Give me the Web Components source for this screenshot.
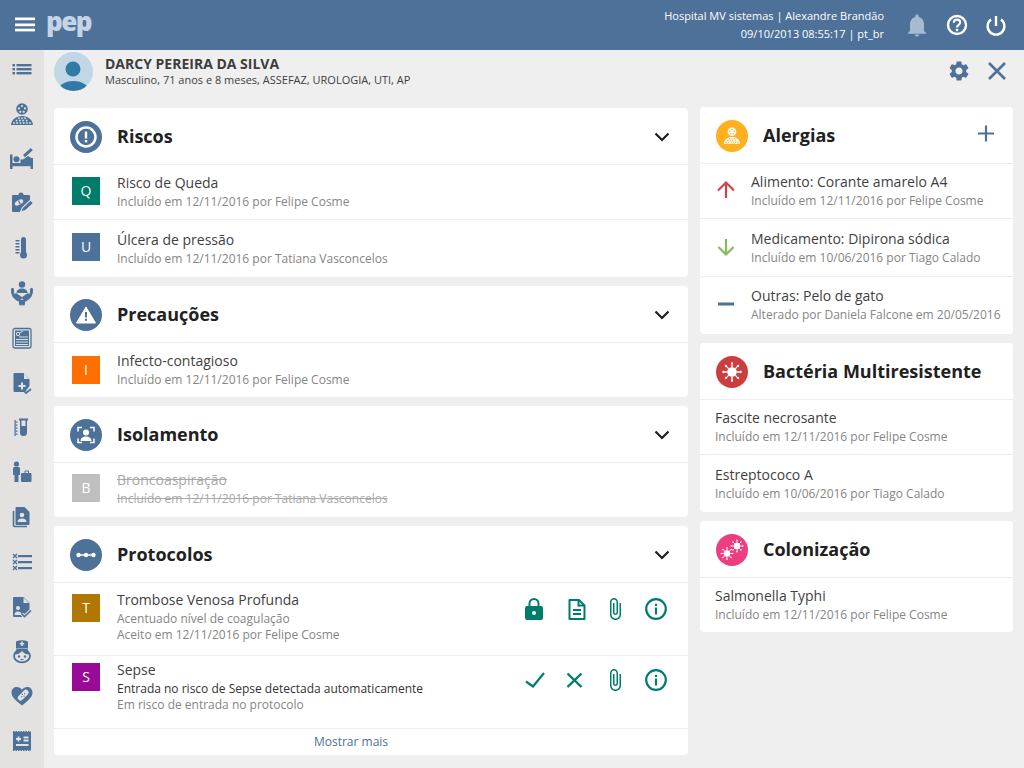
<!DOCTYPE html>
<html lang="pt-BR">
<head>
<meta charset="utf-8">
<title>PEP</title>
<style>
html,body{margin:0;padding:0;width:1024px;height:768px;overflow:hidden;background:#efefef;font-family:"Open Sans",sans-serif}
</style>
</head>
<body>
<pep-app>
  <info-card slot="left" title="Riscos" icon="c-risk" color="#4d7198" chevron>
    <info-row style="--h:55px;--pt:8px;--lt:4px" main="Risco de Queda" sub="Incluído em 12/11/2016 por Felipe Cosme"><row-badge slot="lead" color="#007c6b">Q</row-badge></info-row>
    <info-row style="--h:58px;--pt:10px;--lt:3px" main="Úlcera de pressão" sub="Incluído em 12/11/2016 por Tatiana Vasconcelos"><row-badge slot="lead" color="#4d7198">U</row-badge></info-row>
  </info-card>
  <info-card slot="left" title="Precauções" icon="c-warn" color="#4d7198" chevron>
    <info-row style="--h:55px;--pt:8px;--lt:5px" main="Infecto-contagioso" sub="Incluído em 12/11/2016 por Felipe Cosme"><row-badge slot="lead" color="#ff6f00">I</row-badge></info-row>
  </info-card>
  <info-card slot="left" title="Isolamento" icon="c-iso" color="#4d7198" chevron>
    <info-row struck style="--h:55px;--pt:7px;--lt:4px" main="Broncoaspiração" sub="Incluído em 12/11/2016 por Tatiana Vasconcelos"><row-badge slot="lead" color="#bfbfbf">B</row-badge></info-row>
  </info-card>
  <info-card slot="left" title="Protocolos" icon="c-proto" color="#4d7198" chevron>
    <info-row style="--h:73px;--pt:7px;--lt:4px;--at:7px" main="Trombose Venosa Profunda" sub="Acentuado nível de coagulação" sub2="Aceito em 12/11/2016 por Felipe Cosme">
      <row-badge slot="lead" color="#b07800">T</row-badge>
      <row-actions slot="actions">
        <app-icon name="lock" style="color:#007c6b"></app-icon>
        <app-icon name="doc" style="color:#007c6b;margin-left:19px"></app-icon>
        <app-icon name="clip" style="color:#007c6b;margin-left:14px"></app-icon>
        <app-icon name="info" style="color:#007c6b;margin-left:17px"></app-icon>
      </row-actions>
    </info-row>
    <info-row dark style="--h:73px;--pt:4px;--lt:3px;--at:8px" main="Sepse" sub="Entrada no risco de Sepse detectada automaticamente" sub2="Em risco de entrada no protocolo">
      <row-badge slot="lead" color="#990a96">S</row-badge>
      <row-actions slot="actions">
        <app-icon name="check" style="color:#007c6b"></app-icon>
        <app-icon name="close" style="color:#007c6b;margin-left:17px"></app-icon>
        <app-icon name="clip" style="color:#007c6b;margin-left:16px"></app-icon>
        <app-icon name="info" style="color:#007c6b;margin-left:17px"></app-icon>
      </row-actions>
    </info-row>
    <more-link>Mostrar mais</more-link>
  </info-card>

  <info-card slot="right" title="Alergias" icon="c-allergy" color="#ffb01f" plus>
    <info-row style="--h:55px;--pt:8px;--lt:8px;--pl:16px;--lw:20px;--lg:15px" main="Alimento: Corante amarelo A4" sub="Incluído em 12/11/2016 por Felipe Cosme"><app-icon slot="lead" name="up" size="20" style="color:#d0434a"></app-icon></info-row>
    <info-row style="--h:58px;--pt:10px;--lt:8px;--pl:16px;--lw:20px;--lg:15px" main="Medicamento: Dipirona sódica" sub="Incluído em 10/06/2016 por Tiago Calado"><app-icon slot="lead" name="down" size="20" style="color:#85bb5c"></app-icon></info-row>
    <info-row style="--h:58px;--pt:9px;--lt:8px;--pl:16px;--lw:20px;--lg:15px" main="Outras: Pelo de gato" sub="Alterado por Daniela Falcone em 20/05/2016"><app-icon slot="lead" name="minus" size="20" style="color:#4d7198"></app-icon></info-row>
  </info-card>
  <info-card slot="right" title="Bactéria Multiresistente" icon="c-bact" color="#cc3d3d">
    <info-row style="--h:55px;--pt:8px;--pl:15px;--lw:0px;--lg:0px" main="Fascite necrosante" sub="Incluído em 12/11/2016 por Felipe Cosme"></info-row>
    <info-row style="--h:58px;--pt:10px;--pl:15px;--lw:0px;--lg:0px" main="Estreptococo A" sub="Incluído em 10/06/2016 por Tiago Calado"></info-row>
  </info-card>
  <info-card slot="right" title="Colonização" icon="c-colon" color="#ee3d80">
    <info-row style="--h:55px;--pt:8px;--pl:15px;--lw:0px;--lg:0px" main="Salmonella Typhi" sub="Incluído em 12/11/2016 por Felipe Cosme"></info-row>
  </info-card>
</pep-app>

<script>
const dots=(cx,cy,pts,c)=>pts.map(p=>`<circle cx="${cx+p[0]}" cy="${cy+p[1]}" r="${p[2]||1}" fill="${c}"/>`).join('');
const allergy=(fg,bg)=>`<circle cx="12" cy="7" r="5.800" fill="${fg}"/>`+dots(12,7,[[0,-3,1.100],[-3,-.6,1.100],[3,-.6,1.100],[-1.700,2.800,1.100],[1.700,2.800,1.100]],bg)+
  `<path d="M1 23c.6-5.400 5-9 11-9s10.400 3.600 11 9z" fill="${fg}"/>`+dots(0,0,[[9,16.200,.9],[12,16.200,.9],[15,16.200,.9],[6.500,18.500,.9],[9.800,18.500,.9],[13,18.500,.9],[16.500,18.500,.9],[4,21,.9],[7.200,21,.9],[10.500,21,.9],[13.800,21,.9],[17,21,.9],[20,21,.9]],bg);
const sun=(cx,cy,r,c)=>{let s=`<circle cx="${cx}" cy="${cy}" r="${r}" fill="${c}"/>`;for(let i=0;i<8;i++){const a=i*Math.PI/4,x1=cx+Math.cos(a)*r,y1=cy+Math.sin(a)*r,x2=cx+Math.cos(a)*r*1.8,y2=cy+Math.sin(a)*r*1.8;s+=`<path d="M${x1} ${y1}L${x2} ${y2}" stroke="${c}" stroke-width="${r*.28}"/><circle cx="${x2}" cy="${y2}" r="${r*.24}" fill="${c}"/>`}return s};
const ICONS={
 list:`<g fill="currentColor"><rect x="2.500" y="7" width="2.500" height="2.400"/><rect x="6.500" y="7" width="15" height="2.400"/><rect x="2.500" y="11" width="2.500" height="2.400"/><rect x="6.500" y="11" width="15" height="2.400"/><rect x="2.500" y="15" width="2.500" height="2.400"/><rect x="6.500" y="15" width="15" height="2.400"/></g>`,
 person:allergy('currentColor','#e3e2e1'),
 bed:`<g fill="currentColor"><rect x="0" y="7.500" width="2.500" height="14.500"/><rect x="0" y="16" width="23" height="3.200"/><rect x="20.500" y="11" width="2.500" height="11"/><circle cx="6.500" cy="12.300" r="3"/><path d="M10.500 12.500l3-.2 4.500-3.300 5 3V16H10.500z"/></g><path d="M14 9.200L21.800 2.200" stroke="currentColor" stroke-width="3" fill="none"/>`,
 clip2:`<path fill="currentColor" d="M3 4h5.500a2.500 2.500 0 0 1 5 0H19a1 1 0 0 1 1 1v9l-7 7H3a1 1 0 0 1-1-1V5a1 1 0 0 1 1-1z"/><ellipse cx="9" cy="11.500" rx="4.600" ry="2.400" transform="rotate(-28 9 11.500)" fill="#e3e2e1"/><path d="M8.500 9.500l1.800 3.800" stroke="currentColor" stroke-width="1.200"/><path d="M10.500 21l2-4.500 8-7.500 3 3.200-8 7.500z" fill="currentColor" stroke="#e3e2e1" stroke-width="1.200"/>`,
 thermo:`<g fill="currentColor"><rect x="11" y="1" width="5" height="18" rx="2.500"/><circle cx="13.500" cy="19" r="3.500"/><rect x="5.500" y="4" width="4" height="1.500"/><rect x="5.500" y="7" width="4" height="1.500"/><rect x="5.500" y="10" width="4" height="1.500"/><rect x="5.500" y="13" width="4" height="1.500"/><rect x="5.500" y="16" width="4" height="1.500"/></g>`,
 hands:`<g fill="currentColor"><circle cx="12" cy="3.500" r="3.200"/><path d="M6.500 12c0-3 2.500-4.500 5.500-4.500s5.500 1.500 5.500 4.500z"/></g><g fill="none" stroke="currentColor" stroke-width="3" stroke-linecap="round"><path d="M2.500 8.500C1.800 14 5 17.500 10.500 20V23"/><path d="M21.500 8.500C22.200 14 19 17.500 13.500 20V23"/><path d="M6 13.800l4.500 3.200"/><path d="M18 13.800l-4.500 3.200"/></g>`,
 news:`<rect x="3" y="2.500" width="18" height="19.500" rx="2" fill="none" stroke="currentColor" stroke-width="1.300"/><rect x="5" y="4.500" width="14" height="15.500" fill="currentColor"/><circle cx="8" cy="8" r="1.700" fill="none" stroke="#e3e2e1" stroke-width="1"/><path d="M9.500 7L13 5M9 11h9M6 13.500h12M6 16h12M6 18.500h12" stroke="#e3e2e1" stroke-width="1"/>`,
 docplus:`<path fill="currentColor" d="M4 2h9.500l6 6.500V15l-4.500 6H4.500a1 1 0 0 1-1-1V3a1 1 0 0 1 .5-1z"/><path d="M14 2.500v5.500h5" fill="#e3e2e1"/><path d="M12 11.500v7M8.500 15h7" stroke="#e3e2e1" stroke-width="2"/><path d="M14 20l2 2 5-4" stroke="currentColor" stroke-width="1.700" fill="none"/>`,
 tube:`<g fill="currentColor"><path d="M4.500 5h1.200v16H4.500z"/><path d="M5.500 6.500h2v1.200h-2zM5.500 9.500h2v1.200h-2zM5.500 12.500h2v1.200h-2zM5.500 15.500h2v1.200h-2zM5.500 18.500h2v1.200h-2z"/><path d="M9 3.500h9v2H17v12a3.500 3.500 0 0 1-7 0v-12H9zM11.500 5.500V11h4V5.500z" fill-rule="evenodd"/></g>`,
 bag:`<g fill="currentColor"><circle cx="6.500" cy="4" r="2.600"/><path d="M3 8.500a1.500 1.500 0 0 1 1.500-1.500h4A1.500 1.500 0 0 1 10 8.500V15H8.500v7h-4v-7H3z"/><path d="M12 13h2.500v-1.500a1 1 0 0 1 1-1h2.500a1 1 0 0 1 1 1V13h1.500a1 1 0 0 1 1 1v7a1 1 0 0 1-1 1H12a1 1 0 0 1-1-1v-7a1 1 0 0 1 1-1zM15.500 11.500V13H18v-1.500z" fill-rule="evenodd"/></g>`,
 stack:`<path d="M3.500 6v14.500a1 1 0 0 0 1 1H17" fill="none" stroke="currentColor" stroke-width="1.600"/><path fill="currentColor" d="M6.500 2h8l5 5v12a1 1 0 0 1-1 1h-12a1 1 0 0 1-1-1V3a1 1 0 0 1 1-1z"/><circle cx="12" cy="10" r="2.300" fill="#e3e2e1"/><path d="M7.500 17c0-2.500 2-3.500 4.500-3.500s4.500 1 4.500 3.500z" fill="#e3e2e1"/>`,
 xlist:`<g stroke="currentColor" stroke-width="1.300" fill="none"><path d="M3 4l4 4M7 4l-4 4M3 10l4 4M7 10l-4 4M3 16l4 4M7 16l-4 4"/></g><g fill="currentColor"><rect x="8" y="5" width="14" height="2.200"/><rect x="8" y="11" width="14" height="2.200"/><rect x="8" y="17" width="14" height="2.200"/></g>`,
 doccheck:`<path fill="currentColor" d="M4 2h9.500l6 6v8l-5.500 6H4a1 1 0 0 1-1-1V3a1 1 0 0 1 1-1z"/><path d="M13.500 2.500V8h5.500z" fill="#e3e2e1"/><circle cx="8" cy="13" r="2" fill="#e3e2e1"/><path d="M4.500 20c0-2.500 1.500-3.500 3.500-3.500s3.500 1 3.500 3.500z" fill="#e3e2e1"/><path d="M12 19l2.500 2.500 6.500-6" stroke="#e3e2e1" stroke-width="3.500" fill="none"/><path d="M12 19l2.500 2.500 6.500-6" stroke="currentColor" stroke-width="1.700" fill="none"/>`,
 nurse:`<path fill="currentColor" d="M6 2.500c4-1.800 8-1.800 12 0V9.500H6z"/><path d="M12 2.500v4.500M9.800 4.800h4.400" stroke="#e3e2e1" stroke-width="1.500"/><ellipse cx="12" cy="17" rx="8" ry="6.300" fill="none" stroke="currentColor" stroke-width="1.800"/><path d="M4.500 15.500c3.500 0 5.500-1 7.500-3.500 2 2.500 4 3.500 7.500 3.500l-2-5.500h-11z" fill="currentColor"/><circle cx="9" cy="17.500" r="1.200" fill="currentColor"/><circle cx="15" cy="17.500" r="1.200" fill="currentColor"/><path d="M10.500 20.500h3" stroke="currentColor" stroke-width="1"/>`,
 heart:`<path fill="currentColor" d="M12 21.500C5 16 1.500 12.500 1.500 8.500 1.500 5 4 3 6.800 3c2 0 3.900 1 5.200 2.800C13.300 4 15.200 3 17.200 3 20 3 22.500 5 22.500 8.500c0 4-3.500 7.500-10.500 13z"/><g transform="rotate(-45 13 11)"><rect x="6.500" y="8.500" width="13" height="5.500" rx="2.700" fill="#e3e2e1"/><circle cx="13" cy="10" r=".6" fill="currentColor"/><circle cx="13" cy="12.500" r=".6" fill="currentColor"/><circle cx="11" cy="11.200" r=".6" fill="currentColor"/><circle cx="15" cy="11.200" r=".6" fill="currentColor"/></g>`,
 receipt:`<rect x="3" y="3" width="18" height="18" fill="currentColor"/><path d="M3 2.500h18M3 21.500h18" stroke="currentColor" stroke-width="1" stroke-dasharray="1.500 1"/><path d="M6 10h5M8.500 7.500v5M13.500 8.500h5M13.500 11.500h5M6 16h12.500" stroke="#e3e2e1" stroke-width="1.800"/>`,
 menu:`<g fill="currentColor"><rect x="2" y="4.500" width="20" height="2.700"/><rect x="2" y="10.500" width="20" height="2.700"/><rect x="2" y="15.700" width="20" height="2.700"/></g>`,
 bell:`<path fill="currentColor" d="M12 23.500c1.300 0 2.300-.9 2.300-2h-4.600c0 1.100 1 2 2.300 2zm7-5.500v-6.500c0-3.600-1.900-6.700-5.300-7.500v-.8c0-1-.8-1.700-1.700-1.700s-1.700.7-1.700 1.700V4C6.900 4.800 5 7.900 5 11.500V18l-2.200 2v.8h18.400V20z"/>`,
 help:`<circle cx="12" cy="12" r="9" fill="none" stroke="currentColor" stroke-width="2.400"/><path d="M8.800 9.800c0-2 1.400-3.200 3.200-3.200s3.200 1.200 3.200 2.900c0 2.300-3.200 2.400-3.200 5" fill="none" stroke="currentColor" stroke-width="2.200"/><rect x="10.800" y="15.800" width="2.400" height="2.400" fill="currentColor"/>`,
 power:`<path d="M12 3v10" stroke="currentColor" stroke-width="2.400" fill="none"/><path d="M7 6.500a8.400 8.400 0 1 0 10 0" fill="none" stroke="currentColor" stroke-width="2.400"/>`,
 gear:`<path fill="currentColor" d="M19.140 12.940c.04-.3.06-.61.06-.94 0-.32-.02-.64-.07-.94l2.030-1.580c.18-.14.23-.41.12-.61l-1.920-3.320c-.12-.22-.37-.29-.59-.22l-2.390.96c-.5-.38-1.030-.7-1.620-.94l-.36-2.540c-.04-.24-.24-.41-.48-.41h-3.840c-.24 0-.43.17-.47.41l-.36 2.540c-.59.24-1.130.57-1.620.94l-2.390-.96c-.22-.08-.47 0-.59.22L2.740 8.870c-.12.21-.08.47.12.61l2.030 1.580c-.05.3-.09.63-.09.94s.02.64.07.94l-2.030 1.580c-.18.14-.23.41-.12.61l1.920 3.320c.12.22.37.29.59.22l2.390-.96c.5.38 1.030.7 1.620.94l.36 2.540c.05.24.24.41.48.41h3.840c.24 0 .44-.17.47-.41l.36-2.540c.59-.24 1.130-.56 1.620-.94l2.390.96c.22.08.47 0 .59-.22l1.920-3.320c.12-.22.07-.47-.12-.61l-2.010-1.580zM12 15.600c-1.980 0-3.600-1.620-3.600-3.600s1.620-3.600 3.600-3.600 3.600 1.620 3.600 3.600-1.620 3.600-3.600 3.600z"/>`,
 x:`<path d="M4 4l16 16M20 4L4 20" stroke="currentColor" stroke-width="2.600" fill="none"/>`,
 chev:`<path d="M5.500 9.500l6.500 6.500 6.500-6.500" stroke="#1f1f1f" stroke-width="2.200" fill="none"/>`,
 plus:`<path d="M12 3.500v16M4 11.500h16" stroke="currentColor" stroke-width="2.200" fill="none"/>`,
 lock:`<path fill="currentColor" d="M19 9h-1.500V6.500a5.500 5.500 0 0 0-11 0V9H5a2 2 0 0 0-2 2v10a2 2 0 0 0 2 2h14a2 2 0 0 0 2-2V11a2 2 0 0 0-2-2zM8.500 6.500a3.500 3.500 0 0 1 7 0V9h-7zM12 18a2 2 0 1 1 0-4 2 2 0 0 1 0 4z" fill-rule="evenodd"/>`,
 doc:`<path fill="none" stroke="currentColor" stroke-width="2" d="M4.500 3h9.500l5.500 5.500V22h-15z" stroke-linejoin="round"/><path d="M13.500 3v5.500h6" fill="none" stroke="currentColor" stroke-width="2"/><path d="M8 13h8M8 17h8" stroke="currentColor" stroke-width="2"/>`,
 clip:`<path fill="currentColor" d="M16.500 6v11.500c0 2.210-1.790 4-4 4s-4-1.790-4-4V5c0-1.380 1.120-2.500 2.500-2.500s2.500 1.120 2.500 2.500v10.500c0 .55-.45 1-1 1s-1-.45-1-1V6H10v9.500c0 1.380 1.120 2.500 2.500 2.500s2.500-1.120 2.500-2.500V5c0-2.210-1.790-4-4-4S7 2.790 7 5v12.500c0 3.040 2.460 5.500 5.500 5.500s5.500-2.460 5.500-5.500V6h-1.500z"/>`,
 info:`<circle cx="12" cy="12" r="9.800" fill="none" stroke="currentColor" stroke-width="2.200"/><rect x="10.900" y="10.500" width="2.200" height="7" fill="currentColor"/><rect x="10.900" y="6.800" width="2.200" height="2.200" fill="currentColor"/>`,
 check:`<path d="M4 13.500L11 18.500L22 5" stroke="currentColor" stroke-width="2.200" fill="none"/>`,
 close:`<path d="M4.500 5.500l14 13.500M18.500 5.500l-14 13.500" stroke="currentColor" stroke-width="2.400" fill="none"/>`,
 up:`<path d="M10 18V2.500M2 10.500l8-8 8 8" stroke="currentColor" stroke-width="2.200" fill="none"/>`,
 down:`<path d="M10 2v15.500M2.500 10l7.500 7.500 7.500-7.500" stroke="currentColor" stroke-width="2.200" fill="none"/>`,
 minus:`<rect x="2" y="8.500" width="16" height="3" fill="currentColor"/>`,
 'c-risk':`<circle cx="16" cy="16" r="9.500" fill="none" stroke="#fff" stroke-width="2.500"/><rect x="14.800" y="10.500" width="2.400" height="7" fill="#fff"/><rect x="14.800" y="19" width="2.400" height="2.400" fill="#fff"/>`,
 'c-warn':`<path d="M16 8l9.500 16h-19z" fill="#fff" stroke="#fff" stroke-width="1" stroke-linejoin="round"/><rect x="15" y="13" width="2" height="5.500" fill="#4d7198"/><rect x="15" y="19.800" width="2" height="2" fill="#4d7198"/>`,
 'c-iso':`<path d="M12 8.500H8v4M20 8.500h4v4M8 19.500v4h4M24 19.500v4h-4" fill="none" stroke="#fff" stroke-width="1.500"/><circle cx="16" cy="13.500" r="3" fill="#fff"/><path d="M10.500 22c0-3 2.500-4.500 5.500-4.500s5.500 1.500 5.500 4.500z" fill="#fff"/>`,
 'c-proto':`<path d="M7 16h18" stroke="#fff" stroke-width="1.500"/><circle cx="8.500" cy="16" r="2.200" fill="#fff"/><circle cx="16" cy="16" r="2.200" fill="#fff"/><circle cx="23.500" cy="16" r="2.200" fill="#fff"/>`,
 'c-allergy':`<g transform="translate(7 6.500) scale(.75)">${allergy('#fff','#ffb01f')}</g>`,
 'c-bact':sun(16,16,4.800,'#fff'),
 'c-colon':sun(21,12,3.200,'#fff')+sun(11,19.500,3.200,'#fff')
};
const VB={up:20,down:20,minus:20};

function comp(name,css,html){
  const C=class extends HTMLElement{
    constructor(){super();this.attachShadow({mode:'open'})}
    connectedCallback(){
      const h=typeof html==='function'?html(this):html;
      this.shadowRoot.innerHTML=`<style>${css}</style>${h}`;
    }
  };
  customElements.define(name,C);
}

comp('app-icon',`:host{display:block;flex:none;width:var(--s,24px);height:var(--s,24px);line-height:0}svg{display:block;width:100%;height:100%;overflow:visible}`,
  el=>{const s=el.getAttribute('size')||24;el.style.setProperty('--s',s+'px');const vb=VB[el.getAttribute('name')]||s;return `<svg viewBox="0 0 ${vb} ${vb}" aria-hidden="true">${ICONS[el.getAttribute('name')]||''}</svg>`});

comp('row-badge',`:host{display:flex;align-items:center;justify-content:center;width:28px;height:28px;color:#fff;font-size:14px;line-height:1;background:var(--bg)}`,
  el=>{el.style.setProperty('--bg',el.getAttribute('color'));return `<slot></slot>`});

comp('row-actions',`:host{display:flex;align-items:flex-start}`,`<slot></slot>`);

comp('more-link',`:host{display:flex;box-sizing:border-box;height:27px;border-top:1px solid #ececec;align-items:center;justify-content:center;color:#4d7198;font-size:12px;padding:0 40px 2px 0}`,`<slot></slot>`);

comp('info-row',`
:host{display:flex;box-sizing:border-box;height:var(--h);border-top:1px solid #ececec;padding:var(--pt) 20px 0 var(--pl,18px)}
.lead{flex:none;width:var(--lw,28px);margin-right:var(--lg,17px);margin-top:var(--lt,0)}
.text{flex:1;min-width:0}
.t{font-size:14px;line-height:20px;color:#3f3f3f}
.s{font-size:12px;line-height:16px;color:#858585;white-space:nowrap}
.s.a{margin-top:1px}
.actions{flex:none;margin-top:var(--at,0)}
:host([dark]) .s.a{color:#333}
:host([struck]) .t,:host([struck]) .s{color:#a9a9a9;text-decoration:line-through}
`,el=>{
  const a=n=>el.getAttribute(n);
  return `<div class="lead"><slot name="lead"></slot></div><div class="text"><div class="t">${a('main')}</div><div class="s a">${a('sub')}</div>${a('sub2')?`<div class="s">${a('sub2')}</div>`:''}</div><div class="actions"><slot name="actions"></slot></div>`;
});

comp('info-card',`
:host{display:block;background:#fff;border-radius:4px;overflow:hidden}
header{display:flex;align-items:center;height:56px;padding:0 19px 0 16px;box-sizing:border-box}
.ic{width:32px;height:32px;border-radius:50%;flex:none;margin-right:15px;margin-top:1px}
.ic svg{display:block}
h2{flex:1;margin:0;font-size:18px;line-height:24px;font-weight:700;color:#212121}
.act{flex:none;width:24px;height:24px}
`,el=>{
  const n=el.getAttribute('icon'),c=el.getAttribute('color');
  const act=el.hasAttribute('chevron')?`<app-icon class="act" name="chev" style="margin-right:-5px"></app-icon>`:el.hasAttribute('plus')?`<app-icon class="act" name="plus" style="color:#4d7198;margin-right:-4px;margin-top:-3px"></app-icon>`:'';
  return `<header><div class="ic" style="background:${c}"><svg width="32" height="32" viewBox="0 0 32 32">${ICONS[n]}</svg></div><h2>${el.getAttribute('title')}</h2>${act}</header><slot></slot>`;
});

comp('top-bar',`
:host{display:flex;align-items:center;height:50px;background:#4d7198;color:#fff;padding:0 16px 0 13px;flex:none}
.logo{margin-left:9px;font:800 26px/50px "Open Sans",sans-serif;color:#c4d4e6;letter-spacing:-1.500px;position:relative;top:-4px}
.sp{flex:1}
.who{text-align:right;font-size:11px;line-height:18px;margin-right:21px}
.bell{color:#a6bbd0;margin-right:16px}
.help{margin-right:15px}
`,`<app-icon name="menu"></app-icon><div class="logo">pep</div><div class="sp"></div>
<div class="who"><div>Hospital MV sistemas | Alexandre Brandão</div><div>09/10/2013 08:55:17 | pt_br</div></div>
<app-icon class="bell" name="bell"></app-icon><app-icon class="help" name="help"></app-icon><app-icon name="power"></app-icon>`);

comp('side-bar',`
:host{display:flex;flex-direction:column;align-items:center;justify-content:space-between;box-sizing:border-box;width:44px;height:718px;padding:7px 0 15px;background:#e3e2e1;color:#4d7198;flex:none}
`,`<app-icon name="list"></app-icon><app-icon name="person"></app-icon><app-icon name="bed"></app-icon><app-icon name="clip2"></app-icon><app-icon name="thermo"></app-icon><app-icon name="hands"></app-icon><app-icon name="news"></app-icon><app-icon name="docplus"></app-icon><app-icon name="tube"></app-icon><app-icon name="bag"></app-icon><app-icon name="stack"></app-icon><app-icon name="xlist"></app-icon><app-icon name="doccheck"></app-icon><app-icon name="nurse"></app-icon><app-icon name="heart"></app-icon><app-icon name="receipt"></app-icon>`);

comp('patient-bar',`
:host{display:flex;align-items:flex-start;box-sizing:border-box;height:57px;padding:2px 15px 0 10px;flex:none}
svg.av{display:block;flex:none;margin-right:12px}
.tx{flex:1;padding-top:3px}
.n{font-size:14px;line-height:18px;font-weight:700;color:#3d3d3d}
.m{font-size:11px;line-height:14px;color:#3d3d3d}
.tools{display:flex;gap:14px;color:#4d7198;padding-top:7px}
`,`<svg class="av" width="39" height="39" viewBox="0 0 39 39"><defs><clipPath id="avc"><circle cx="19.500" cy="19.500" r="19.500"/></clipPath></defs><circle cx="19.500" cy="19.500" r="19.500" fill="#c1d7e6"/><g clip-path="url(#avc)" fill="#317aa6"><circle cx="19" cy="17" r="7.500"/><ellipse cx="19.500" cy="40" rx="16" ry="11"/></g></svg>
<div class="tx"><div class="n">DARCY PEREIRA DA SILVA</div><div class="m">Masculino, 71 anos e 8 meses, ASSEFAZ, UROLOGIA, UTI, AP</div></div>
<div class="tools"><app-icon name="gear"></app-icon><app-icon name="x"></app-icon></div>`);

comp('pep-app',`
:host{display:flex;flex-direction:column;width:1024px;height:768px;overflow:hidden}
.body{display:flex;flex:1;min-height:0}
.main{flex:1;min-width:0;display:flex;flex-direction:column}
.cols{display:grid;grid-template-columns:634px 313px;column-gap:12px;padding:0 11px 0 10px;align-items:start}
.col{display:flex;flex-direction:column;gap:9px}
.col.l{margin-top:1px}
`,`<top-bar></top-bar><div class="body"><side-bar></side-bar><div class="main"><patient-bar></patient-bar><div class="cols"><div class="col l"><slot name="left"></slot></div><div class="col"><slot name="right"></slot></div></div></div></div>`);
</script>
</body>
</html>
